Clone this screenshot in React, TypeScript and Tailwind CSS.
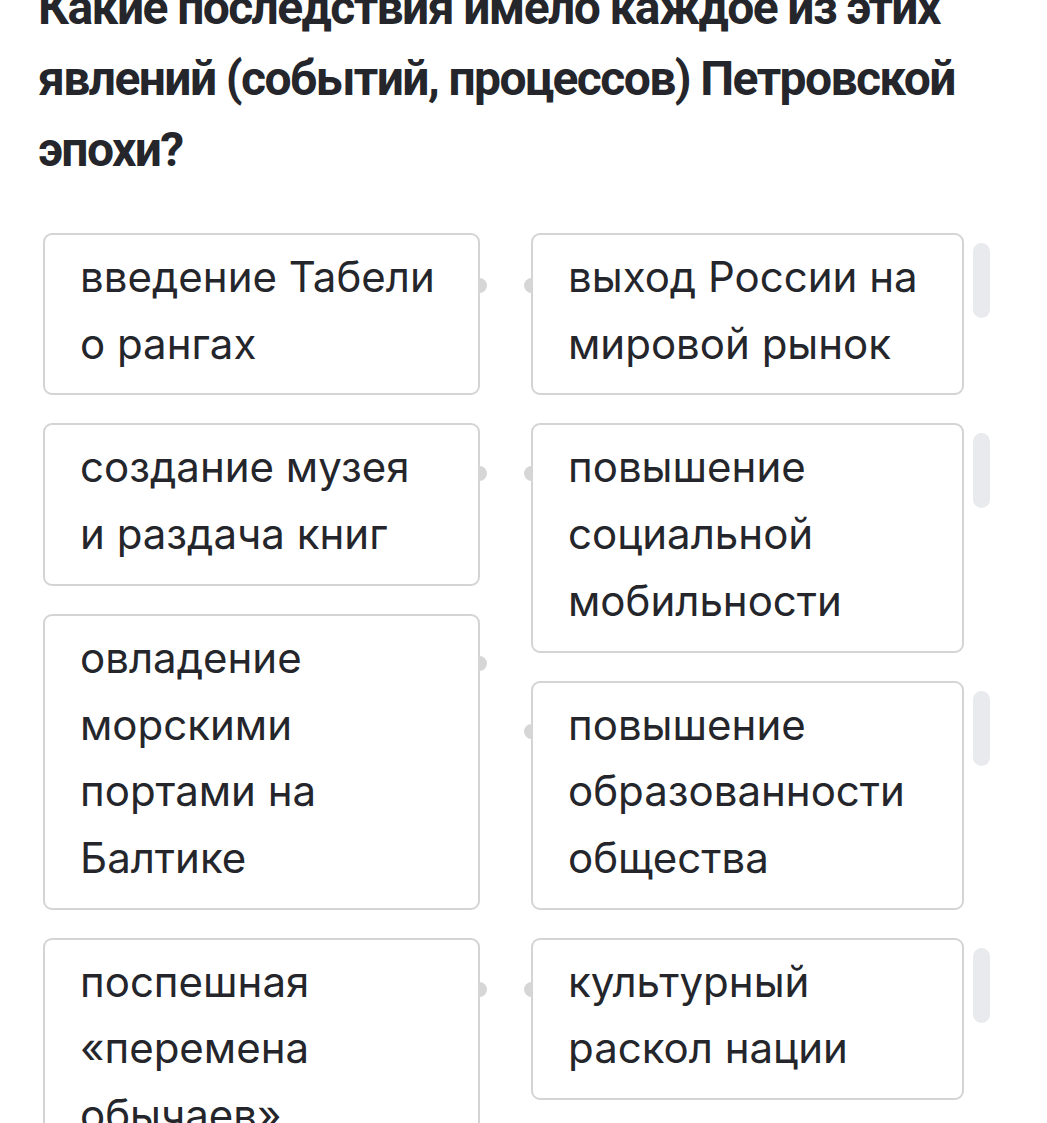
import React from "react";

type Item = { text: string[]; nubTop: number };

const left: Item[] = [
  { text: ["введение Табели", "о рангах"], nubTop: 52 },
  { text: ["создание музея", "и раздача книг"], nubTop: 50 },
  { text: ["овладение", "морскими", "портами на", "Балтике"], nubTop: 49 },
  { text: ["поспешная", "«перемена", "обычаев»"], nubTop: 51 },
];

const right: Item[] = [
  { text: ["выход России на", "мировой рынок"], nubTop: 52 },
  { text: ["повышение", "социальной", "мобильности"], nubTop: 50 },
  { text: ["повышение", "образованности", "общества"], nubTop: 50 },
  { text: ["культурный", "раскол нации"], nubTop: 51 },
];

function Card({ item, side }: { item: Item; side: "left" | "right" }) {
  return (
    <div className="relative rounded-[9px] border-2 border-[#d4d4d4] bg-white pl-[35px] pr-4 pt-[9px] pb-[16px]">
      {item.text.map((line, i) => (
        <div key={i} className="text-[42px] leading-[66.7px] text-[#24262b] whitespace-nowrap">
          {line}
        </div>
      ))}
      {side === "left" ? (
        <span
          className="absolute -right-[9px] h-[15px] w-[8px] rounded-r-full bg-[#d6d6d6]"
          style={{ top: item.nubTop - 9 }}
        />
      ) : (
        <span
          className="absolute -left-[9px] h-[15px] w-[8px] rounded-l-full bg-[#d6d6d6]"
          style={{ top: item.nubTop - 9 }}
        />
      )}
    </div>
  );
}

export default function App() {
  return (
    <div className="h-[1123px] overflow-hidden bg-white" style={{ fontFamily: "Inter, 'Noto Sans', sans-serif" }}>
      <h1
        className="-mt-[28px] pl-[38px] pr-4 text-[48px] font-bold leading-[71px] tracking-[-1.6px] text-[#24262b] whitespace-nowrap"
        style={{ fontFamily: "Roboto, 'Liberation Sans', sans-serif" }}
      >
        Какие последствия имело каждое из этих
        <br />
        явлений (событий, процессов) Петровской
        <br />
        эпохи?
      </h1>

      <div className="mt-[48px] ml-[43px] flex items-start gap-[51px]">
        <div className="flex w-[437px] flex-col gap-[28px]">
          {left.map((item, i) => (
            <Card key={i} item={item} side="left" />
          ))}
        </div>
        <div className="flex flex-col gap-[28px]">
          {right.map((item, i) => (
            <div key={i} className="flex items-start gap-[9px]">
              <div className="w-[433px]">
                <Card item={item} side="right" />
              </div>
              <div className="mt-[10px] h-[75px] w-[17px] rounded-full bg-[#e8eaed]" />
            </div>
          ))}
        </div>
      </div>
    </div>
  );
}
